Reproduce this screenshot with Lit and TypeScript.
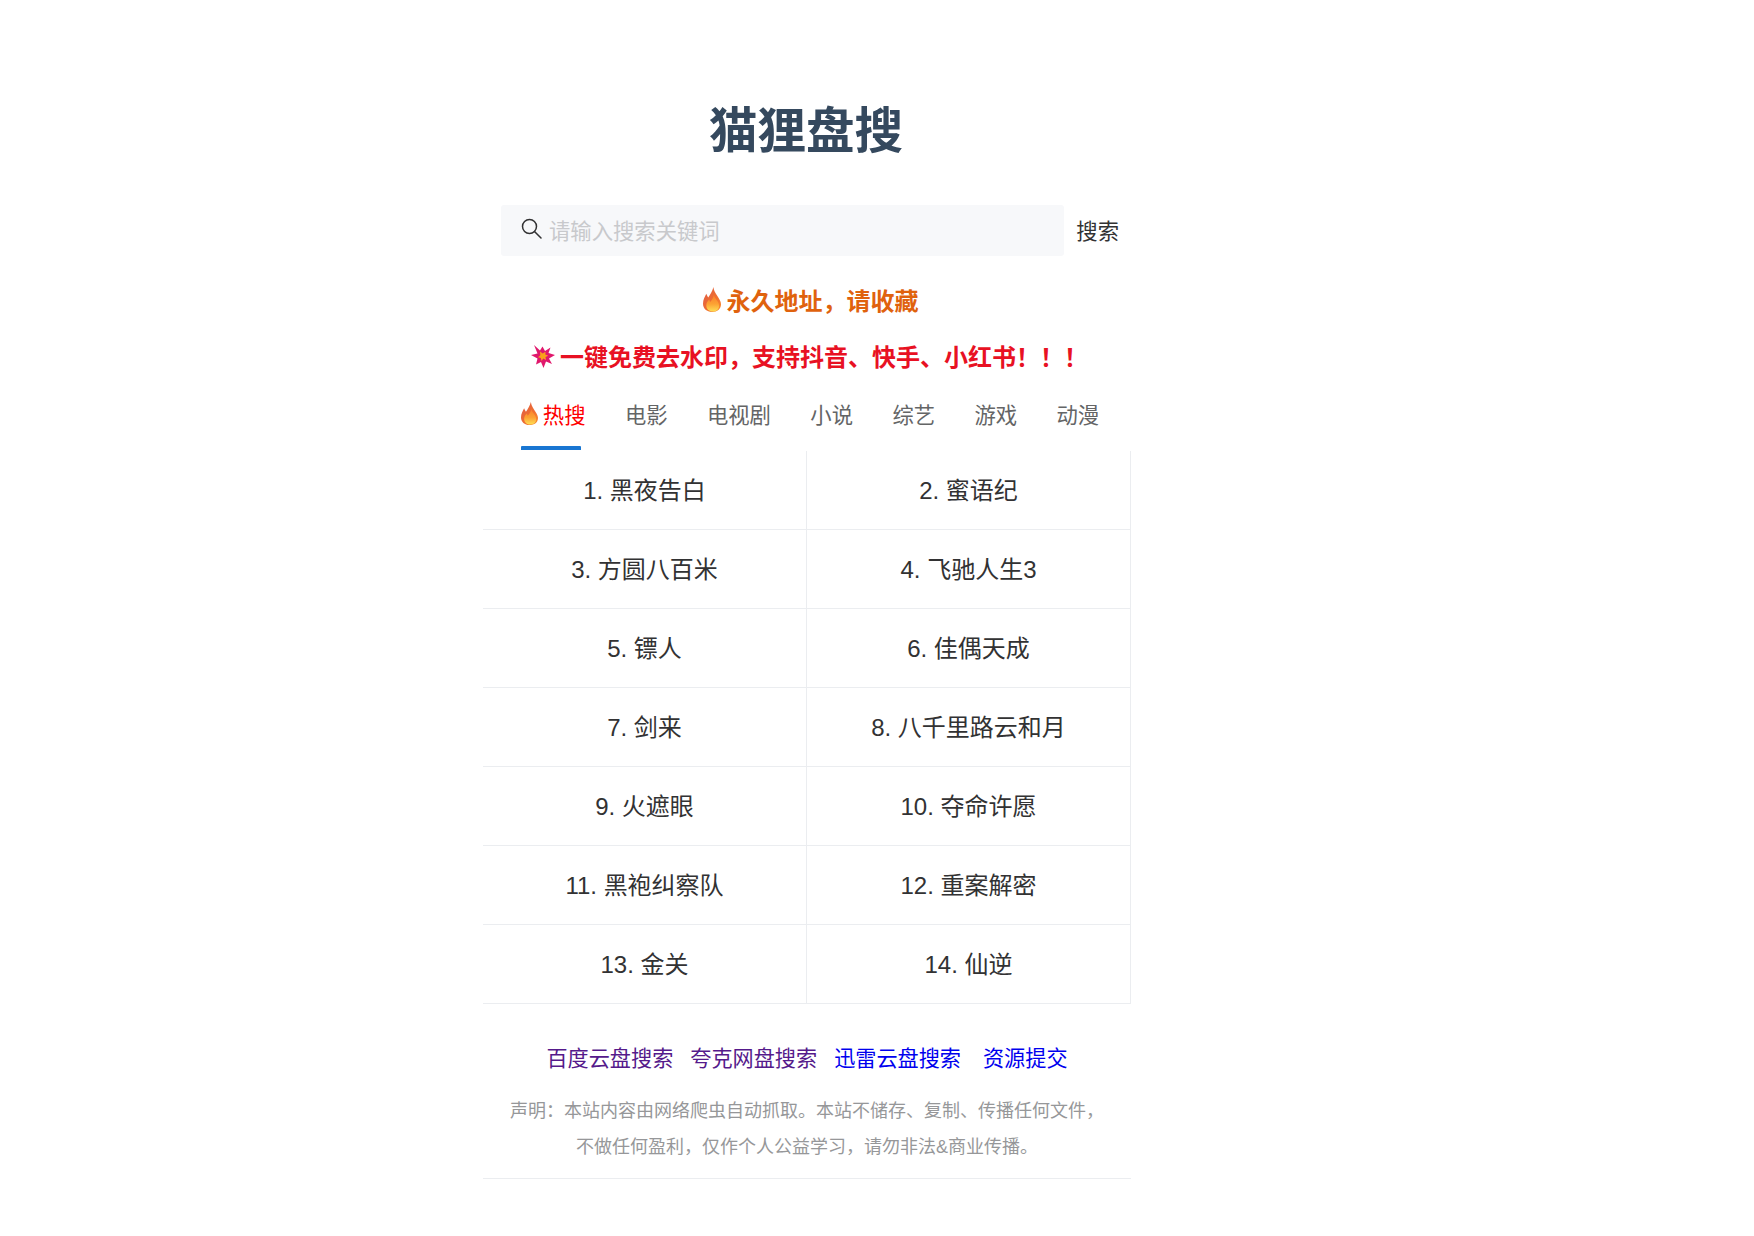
import { LitElement, html, css } from "lit";
import { customElement } from "lit/decorators.js";

const flame = html`<svg class="flame" viewBox="0 0 19 26" preserveAspectRatio="none" aria-hidden="true">
  <defs>
    <linearGradient id="fo" x1="0" y1="0" x2="1" y2="1"><stop offset="0" stop-color="#dd5a48"/><stop offset="0.6" stop-color="#f0702f"/><stop offset="1" stop-color="#f88f2c"/></linearGradient>
    <linearGradient id="fi" x1="0" y1="0" x2="0" y2="1"><stop offset="0" stop-color="#f97f2b"/><stop offset="0.55" stop-color="#fca233"/><stop offset="1" stop-color="#fede55"/></linearGradient>
  </defs>
  <path fill="url(#fo)" d="M11 0C11.500 5 14.500 8 16.500 11.500C18 14 19 16 19 18C19 23 15 26 9.500 26C4 26 0 22.500 0 17.500C0 13 2 10 3.500 7C4 8.500 5 10 5.500 11C7.500 8 10 4.500 11 0Z"/>
  <path fill="url(#fi)" d="M11.500 8C12 12 17 14.500 17 19.500C17 23.500 14 25.500 10.500 25.500C6.500 25.500 3.500 23.300 3.500 19C3.500 16.500 5 14.500 6.500 13C7 14 7.300 15 7.500 15.500C9.500 13.500 11 11 11.500 8Z"/>
</svg>`;

const boom = html`<svg class="boom" viewBox="0 0 24 24" aria-hidden="true">
  <path fill="#e0186c" d="M3 1L9 6.500L11.500 2.500L14 7L19.500 3.500L17.500 9L24 11L18 14.500L21 20L15 17.500L12.500 24L10 18L5 20.500L6.500 14.500L0 11L6.500 9.500Z"/>
  <path fill="#f9a11b" d="M9 7.500L11.700 9.500L14.500 7.800L14.300 10.500L17.200 11.700L14.500 13L15 16L12.300 14.500L10.500 17L9.800 14L7 13.300L9.300 11.300Z"/>
</svg>`;

const items = [
  "1. 黑夜告白", "2. 蜜语纪", "3. 方圆八百米", "4. 飞驰人生3", "5. 镖人", "6. 佳偶天成",
  "7. 剑来", "8. 八千里路云和月", "9. 火遮眼", "10. 夺命许愿", "11. 黑袍纠察队", "12. 重案解密",
  "13. 金关", "14. 仙逆",
];
const tabs = ["电影", "电视剧", "小说", "综艺", "游戏", "动漫"];

@customElement("app-root")
export class AppRoot extends LitElement {
  static styles = css`
    :host {
      display: block;
      background: #fff;
      min-height: 1236px;
      font-family: "Liberation Sans", "Noto Sans CJK SC", sans-serif;
      color: #323233;
    }
    .page {
      width: 648px;
      margin-left: 483px;
      padding-top: 98px;
      display: flex;
      flex-direction: column;
    }
    h1 {
      margin: 0;
      padding-right: 2px;
      height: 66px;
      line-height: 66px;
      font-size: 48.500px;
      font-weight: 700;
      text-align: center;
      color: #35495e;
    }
    .search {
      margin-top: 41px;
      display: flex;
      align-items: center;
      padding: 0 12px 0 18px;
    }
    .box {
      flex: 1;
      height: 51px;
      box-sizing: border-box;
      padding: 0 0 2px 20px;
      background: #f7f8fa;
      border-radius: 3px;
      display: flex;
      align-items: center;
      gap: 7px;
      font-size: 21.33px;
      color: #c8c9cc;
    }
    .box svg { width: 21px; height: 21px; flex: none; margin-top: -2px; }
    .btn { font-size: 21.33px; margin-left: 12.500px; margin-top: -2px; }
    .notice {
      font-weight: 700;
      font-size: 24px;
      text-align: center;
      display: flex;
      justify-content: center;
      align-items: center;
      gap: 6px;
    }
    .orange { color: #e0620d; margin-top: 25.500px; height: 36px; padding-left: 7px; }
    .red { color: #e81123; margin-top: 20px; height: 36px; padding-left: 5px; }
    .flame { width: 18px; height: 25px; flex: none; }
    .boom { width: 24px; height: 24px; flex: none; margin-right: -1px; }
    .tabs {
      display: flex;
      justify-content: center;
      margin-top: 8px;
      padding-left: 6px;
      height: 69.500px;
      font-size: 21.33px;
      color: #646566;
    }
    .tab {
      padding: 0 19.700px;
      height: 64px;
      display: flex;
      align-items: center;
      position: relative;
      white-space: nowrap;
    }
    .tab.on { color: #ff0000; gap: 5px; }
    .tab.on .flame { width: 17px; height: 23px; }
    .bar {
      position: absolute;
      left: 19.700px;
      right: 24.500px;
      bottom: -4px;
      height: 4px;
      background: #1976d2;
      border-radius: 1px 1px 0 0;
    }
    .grid {
      display: grid;
      grid-template-columns: 1fr 1fr;
    }
    .cell {
      height: 79px;
      box-sizing: border-box;
      padding-bottom: 3px;
      display: flex;
      align-items: center;
      justify-content: center;
      font-size: 24px;
      color: #323233;
      border-right: 1px solid #ebedf0;
      border-bottom: 1px solid #ebedf0;
      white-space: nowrap;
    }
    .links {
      margin-top: 32px;
      height: 40px;
      display: flex;
      justify-content: center;
      align-items: center;
      gap: 17px;
      font-size: 21.150px;
    }
    .links a { text-decoration: none; color: #0000ee; }
    .links a.seen { color: #551a8b; }
    .links a.last { margin-left: 5px; }
    .foot {
      margin-top: 17px;
      font-size: 18px;
      line-height: 36px;
      color: #969799;
      text-align: center;
      padding-bottom: 13px;
      border-bottom: 1px solid #ebedf0;
    }
  `;

  render() {
    return html`
      <div class="page">
        <h1>猫狸盘搜</h1>
        <div class="search">
          <div class="box">
            <svg viewBox="0 0 21 21" fill="none" stroke="#323233" stroke-width="1.500">
              <circle cx="8.500" cy="8.500" r="7"/>
              <path d="M13.500 13.500L20 20" stroke-linecap="round"/>
            </svg>
            <span>请输入搜索关键词</span>
          </div>
          <span class="btn">搜索</span>
        </div>
        <div class="notice orange">${flame}<span>永久地址，请收藏</span></div>
        <div class="notice red">${boom}<span>一键免费去水印，支持抖音、快手、小红书！！！</span></div>
        <div class="tabs">
          <div class="tab on">${flame}<span>热搜</span><div class="bar"></div></div>
          ${tabs.map((t) => html`<div class="tab">${t}</div>`)}
        </div>
        <div class="grid">
          ${items.map((t) => html`<div class="cell">${t}</div>`)}
        </div>
        <div class="links">
          <a class="seen" href="#a">百度云盘搜索</a>
          <a class="seen" href="#b">夸克网盘搜索</a>
          <a href="#c">迅雷云盘搜索</a>
          <a class="last" href="#d">资源提交</a>
        </div>
        <div class="foot">
          <div>声明：本站内容由网络爬虫自动抓取。本站不储存、复制、传播任何文件，</div>
          <div>不做任何盈利，仅作个人公益学习，请勿非法&amp;商业传播。</div>
        </div>
      </div>
    `;
  }
}
